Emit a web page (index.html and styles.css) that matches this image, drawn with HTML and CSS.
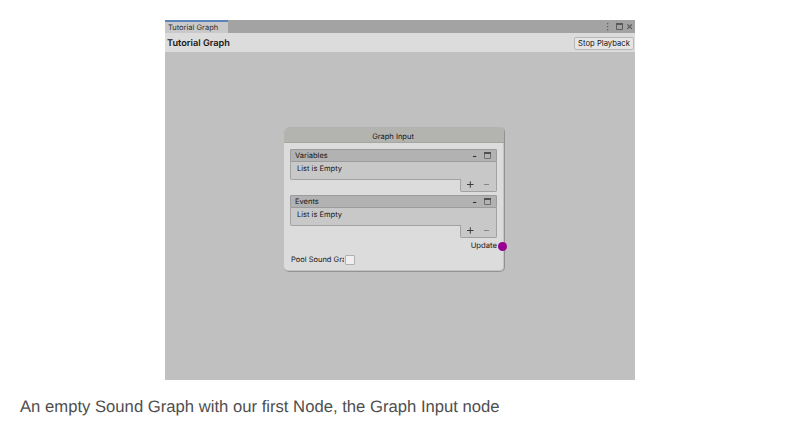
FILE: index.html
```html
<!DOCTYPE html>
<html lang="en">
<head>
<meta charset="utf-8">
<title>Tutorial Graph</title>
<link rel="stylesheet" href="styles.css">
</head>
<body>
<figure class="figure">
  <div class="window">
    <div class="tabbar">
      <div class="tab">Tutorial Graph</div>
      <svg class="window-icons" width="30" height="13" viewBox="0 0 30 13">
        <g fill="#606060"><rect x="2" y="3" width="1.3" height="1.3"/><rect x="2" y="6" width="1.3" height="1.3"/><rect x="2" y="9" width="1.3" height="1.3"/></g>
        <path d="M11.5 4V9.5H17.500V4" fill="none" stroke="#5c5c5c"/><path d="M11 4H18" stroke="#585858" stroke-width="2"/>
        <path d="M22.300 4.300l4.600 4.600m0-4.600l-4.600 4.600" stroke="#585858" stroke-width="1.200"/>
      </svg>
    </div>
    <div class="toolbar">
      <span class="title">Tutorial Graph</span>
      <button class="stop" type="button">Stop Playback</button>
    </div>
    <div class="canvas">
      <section class="node">
        <header class="node-header">Graph Input</header>
        <div class="node-body">
          <div class="list">
            <div class="list-header"><span>Variables</span>
              <svg width="24" height="11" viewBox="0 0 24 11"><path d="M1 6.500H4.300" stroke="#333" stroke-width="1.100"/><path d="M12.500 3V8.500H18.500V3" fill="none" stroke="#707070"/><path d="M12 3H19" stroke="#505050" stroke-width="2"/></svg>
            </div>
            <div class="list-body">List is Empty</div>
            <div class="list-footer">
              <svg width="35" height="12" viewBox="0 0 35 12"><path d="M6 5.500H12.500M9.300 2.300V8.700" stroke="#3c3c3c"/><path d="M23 5.500H28" stroke="#858585"/></svg>
            </div>
          </div>
          <div class="list">
            <div class="list-header"><span>Events</span>
              <svg width="24" height="11" viewBox="0 0 24 11"><path d="M1 6.500H4.300" stroke="#333" stroke-width="1.100"/><path d="M12.500 3V8.500H18.500V3" fill="none" stroke="#707070"/><path d="M12 3H19" stroke="#505050" stroke-width="2"/></svg>
            </div>
            <div class="list-body">List is Empty</div>
            <div class="list-footer">
              <svg width="35" height="12" viewBox="0 0 35 12"><path d="M6 5.500H12.500M9.300 2.300V8.700" stroke="#3c3c3c"/><path d="M23 5.500H28" stroke="#858585"/></svg>
            </div>
          </div>
          <div class="output"><span>Update</span><i class="port"></i></div>
          <div class="option"><span class="option-label">Pool Sound Graph</span><i class="checkbox"></i></div>
        </div>
      </section>
    </div>
  </div>
  <figcaption class="caption">An empty Sound Graph with our first Node, the Graph Input node</figcaption>
</figure>
</body>
</html>
```

FILE: styles.css
```css
* { box-sizing: border-box; }
body { margin: 0; background: #fff; }
.figure { margin: 0; padding-top: 20px; }
.window {
  width: 470px;
  height: 360px;
  margin-left: 165px;
  display: flex;
  flex-direction: column;
  font: 7.5px/12px Inter, sans-serif;
  text-rendering: geometricPrecision;
  color: #161616;
}
.tabbar {
  height: 13px;
  background: #a3a3a3;
  display: flex;
  justify-content: space-between;
}
.tab {
  width: 63px;
  padding: 0 0 0 3px;
  background: #c9c9c9;
  border-top: 2px solid #5b84ba;
  color: #303030;
  white-space: nowrap;
}
.window-icons { display: block; }
.toolbar {
  height: 19px;
  background: #dcdcdc;
  display: flex;
  align-items: center;
  justify-content: space-between;
  padding: 1px 1px 0 2px;
}
.title { font-size: 9.2px; font-weight: 600; padding-top: 1px; }
.stop {
  width: 60px;
  height: 13px;
  padding: 0;
  border: 1px solid #b8b8b8;
  border-radius: 2px;
  background: #e5e5e5;
  color: #161616;
  font: 7.7px/11px Inter, sans-serif;
  white-space: nowrap;
}
.canvas { flex: 1; background: #c0c0c0; padding: 75px 0 0 119px; }
.node {
  width: 221px;
  height: 145px;
  border: solid #929292;
  border-width: 0 1.5px 1.5px 0;
  border-radius: 5px;
  background: #dcdcdc;
  box-shadow: inset -1px -1px #c4c4c4;
}
.node-header {
  height: 16px;
  padding: 4px 2px 0 0;
  border-bottom: 1px solid #a5a6a2;
  border-radius: 5px 3px 0 0;
  background: #b3b4b0;
  text-align: center;
}
.node-body { padding: 6px 7px 0 6px; }
.list { height: 43px; margin-bottom: 3px; }
.list-header {
  height: 13px;
  border: 1px solid #9c9c9c;
  border-radius: 1px 1px 0 0;
  background: #b2b2b2;
  display: flex;
  justify-content: space-between;
  padding-left: 4px;
}
.list-header svg { display: block; }
.list-body {
  height: 18px;
  padding: 1px 0 0 6px;
  border: 1px solid #a2a2a2;
  border-top: 0;
  border-radius: 0 0 0 2px;
  background: #c8c8c8;
}
.list-footer {
  width: 37px;
  height: 13px;
  margin: -1px 0 0 auto;
  border: 1px solid #a2a2a2;
  border-top: 0;
  border-radius: 0 0 2px 2px;
  background: #c8c8c8;
}
.list-footer svg { display: block; }
.output {
  height: 10px;
  margin-right: -7px;
  display: flex;
  justify-content: flex-end;
  align-items: center;
  gap: 1px;
  font-size: 7.7px;
}
.port {
  width: 9px;
  height: 9px;
  margin-right: -3px;
  border-radius: 50%;
  background: #98008f;
}
.option {
  height: 10px;
  margin: 4px 0 0 1px;
  display: flex;
  align-items: center;
}
.option-label { width: 53px; overflow: hidden; white-space: nowrap; }
.checkbox {
  width: 10px;
  height: 10px;
  margin-left: 1px;
  border: 1px solid #b0b0b0;
  border-radius: 1px;
  background: #efefef;
}
.caption {
  margin: 16px 0 0 20px;
  font: 16.67px/21px "Liberation Sans", sans-serif;
  text-rendering: geometricPrecision;
  color: #4f4f4f;
}
```
